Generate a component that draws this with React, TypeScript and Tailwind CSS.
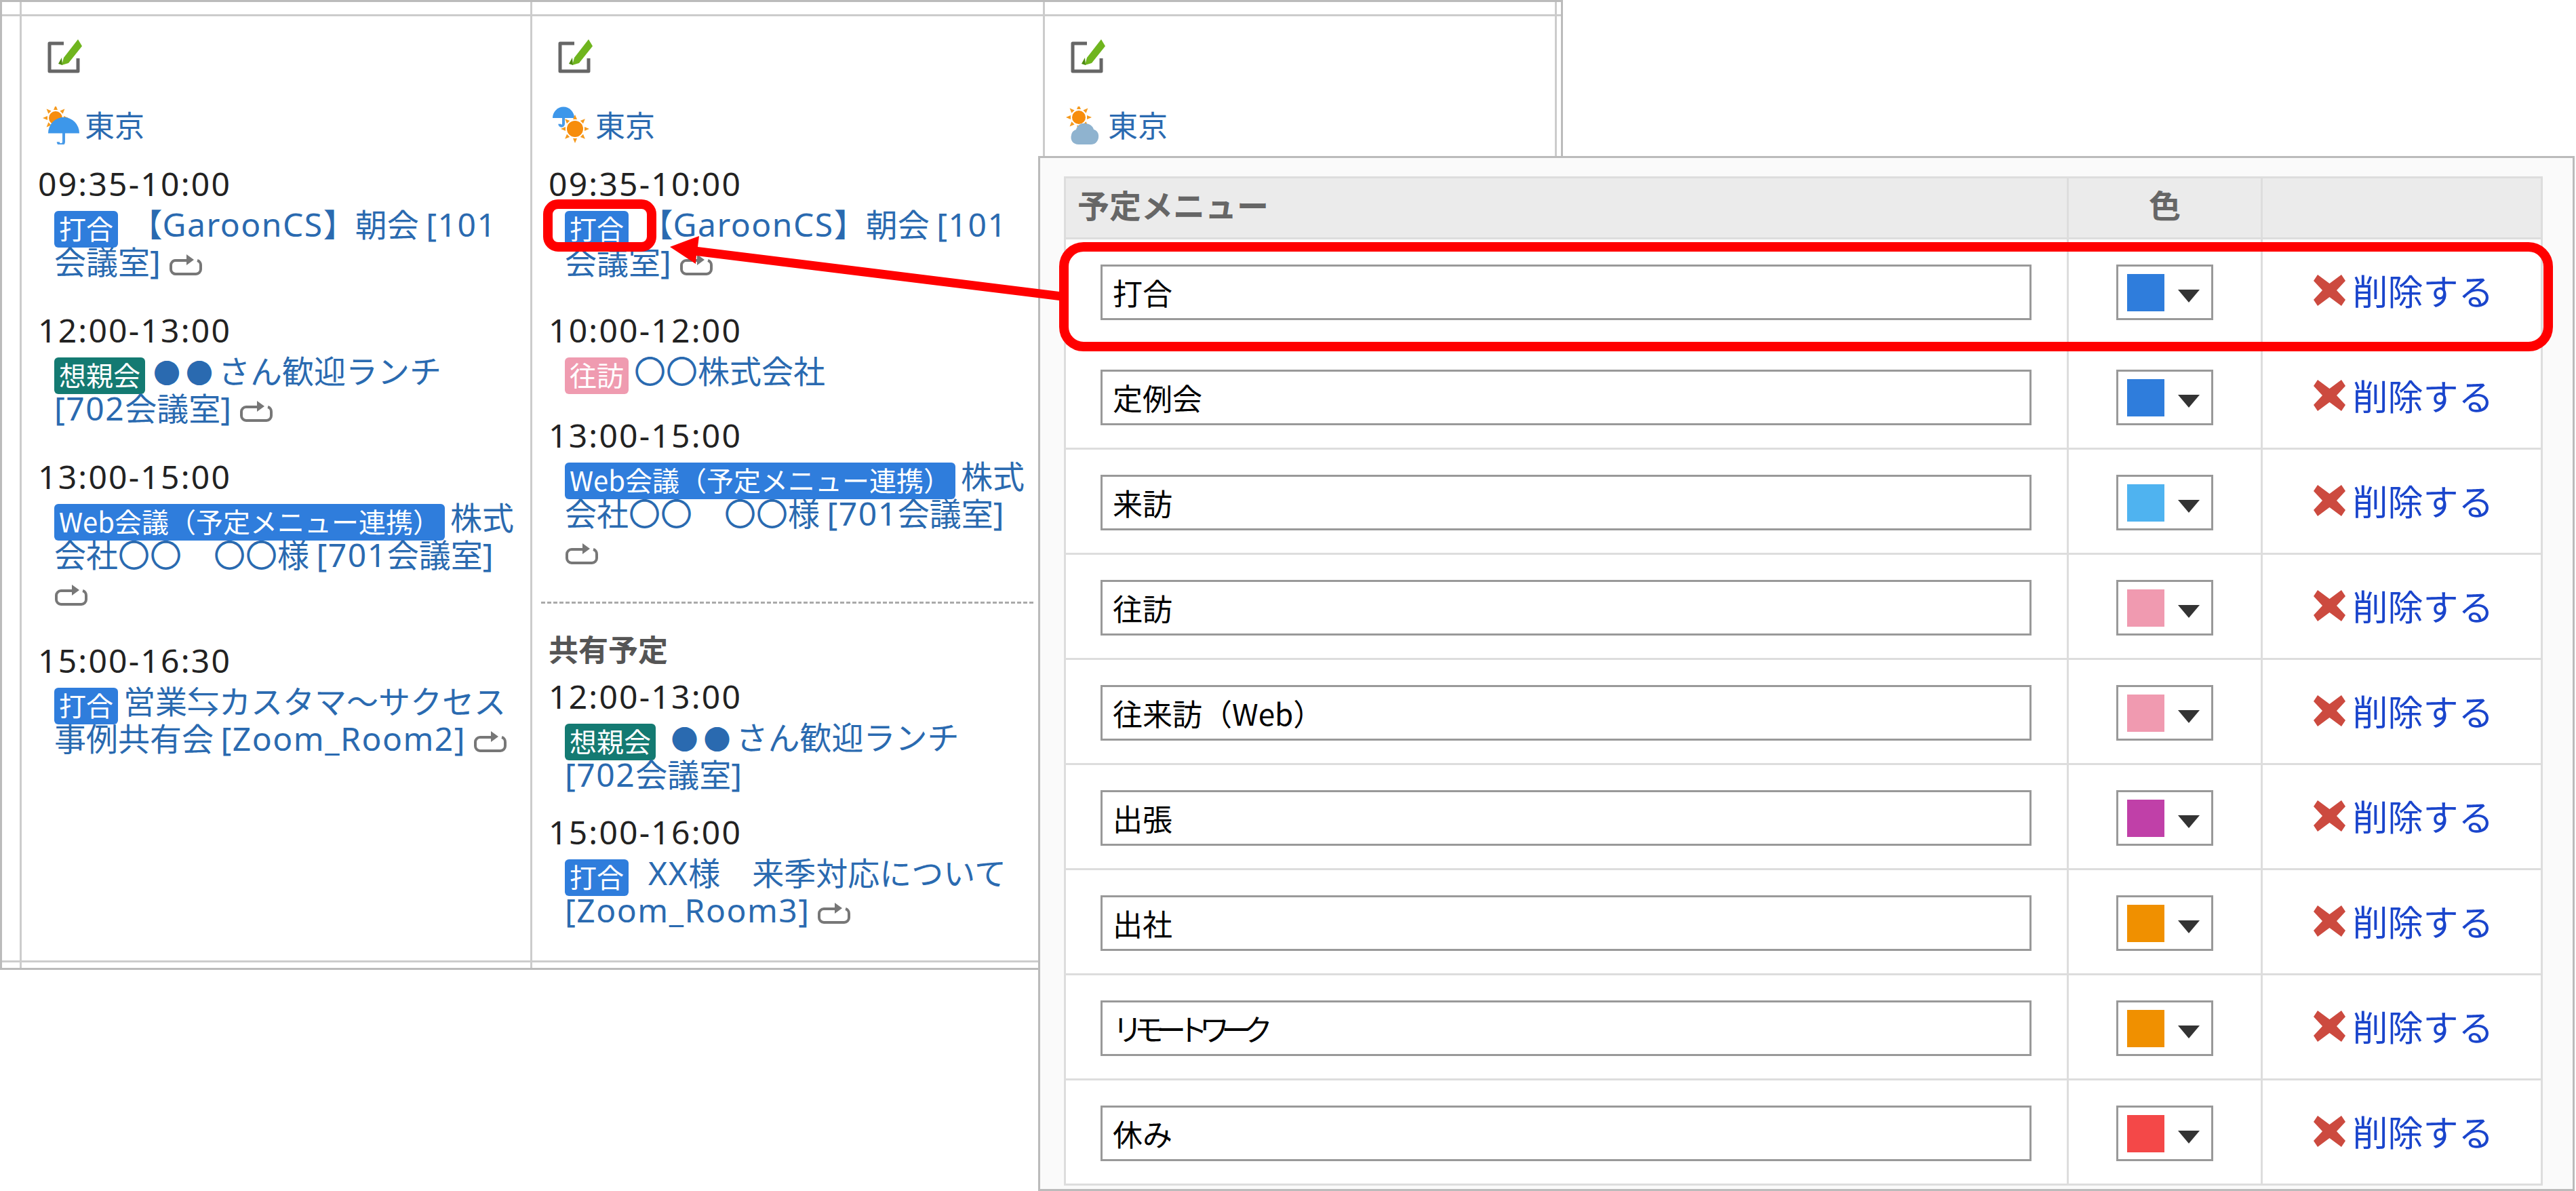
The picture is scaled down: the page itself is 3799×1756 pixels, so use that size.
import type { ReactNode } from "react";

const CJK = '"Noto Sans CJK JP", sans-serif';

/* Latin runs sit larger and wider than kanji in the original's UI font; the
   round bullets are also smaller than a full-width glyph there */
function Mixed({ text }: { text: string }) {
  const parts = text.split(/([\x21-\x7e]+(?: [\x21-\x7e]+)*|●+)/);
  return (
    <>
      {parts.map((p, i) => {
        if (/[\x21-\x7e]/.test(p)) {
          return (
            <span key={i} className="inline-block font-['Noto_Sans'] text-[48px] leading-[55px] tracking-[1.5px]">
              {p}
            </span>
          );
        }
        if (p.startsWith("●")) {
          return (
            <span key={i} className="ml-[4px] inline-block text-[40px] leading-[55px] tracking-[8px]">
              {p}
            </span>
          );
        }
        return (
          <span key={i} className="inline-block leading-[55px]">
            {p}
          </span>
        );
      })}
    </>
  );
}

function EditIcon() {
  return (
    <svg width="52" height="50" viewBox="0 0 52 50" className="ml-[14px] block">
      <path d="M24 6H3v41h42V28" fill="none" stroke="#666" strokeWidth="5" strokeLinejoin="round" />
      <path d="M45 0l6 10-20 25-10 3 3-11z" fill="#6fb51e" />
      <path d="M16 36l5-9 1 11z" fill="#4d8a10" />
    </svg>
  );
}

function Rays({ cx, cy, r }: { cx: number; cy: number; r: number }) {
  return (
    <g fill="#f59a1e">
      {[0, 45, 90, 135, 180, 225, 270, 315].map((a) => (
        <path
          key={a}
          transform={`rotate(${a} ${cx} ${cy})`}
          d={`M${cx - 3} ${cy - r - 2}h6l-3 -7z`}
        />
      ))}
      <circle cx={cx} cy={cy} r={r} fill="#f78d0c" />
    </g>
  );
}

function Umbrella({ x, y, w }: { x: number; y: number; w: number }) {
  const h = w * 0.95;
  return (
    <g>
      <path
        d={`M${x + w / 2} ${y + h * 0.3}v${h * 0.55}a${w * 0.09} ${w * 0.09} 0 0 1 -${w * 0.18} 0`}
        fill="none"
        stroke="#4a9be8"
        strokeWidth="4"
      />
      <path
        d={`M${x} ${y + h * 0.56}A${w / 2} ${h * 0.54} 0 0 1 ${x + w} ${y + h * 0.56}z`}
        fill="#3d97ea"
      />
    </g>
  );
}

function Weather({ kind }: { kind: "rain" | "sun" | "cloud" }) {
  return (
    <svg width="56" height="56" viewBox="0 0 56 56" className="block shrink-0">
      {kind === "rain" && (
        <>
          <Rays cx={20} cy={17} r={10} />
          <Umbrella x={9} y={15} w={46} />
        </>
      )}
      {kind === "sun" && (
        <>
          <Umbrella x={0} y={0} w={32} />
          <Rays cx={33} cy={33} r={12} />
        </>
      )}
      {kind === "cloud" && (
        <>
          <Rays cx={20} cy={16} r={10} />
          <path
            d="M20 56c-9 0-13-7-11-14 1-5 4-7 7-8 2-7 8-10 14-9 8 1 11 5 12 9 5 1 8 6 7 12-1 6-5 10-11 10z"
            fill="#8fb3cf"
          />
        </>
      )}
    </svg>
  );
}

function RepeatIcon() {
  return (
    <svg width="50" height="34" viewBox="0 0 50 34" className="inline-block align-[-4px]">
      <path
        d="M26 10H10a7 7 0 0 0-7 7v6a7 7 0 0 0 7 7h30a7 7 0 0 0 7-7v-6a7 7 0 0 0-5-7"
        fill="none"
        stroke="#777"
        strokeWidth="4"
      />
      <path d="M26 1l11 8-11 8z" fill="#777" />
    </svg>
  );
}

const BADGE = {
  blue: "bg-[#2f7ddc]",
  green: "bg-[#147a72]",
  pink: "bg-[#ef9bb0]",
};

function Badge({ color, children }: { color: keyof typeof BADGE; children: ReactNode }) {
  return (
    <span
      className={`mr-[8px] inline-block h-[54px] rounded-[6px] px-[7px] align-[-4px] text-[40px] leading-[50px] text-white ${BADGE[color]}`}
    >
      {children}
    </span>
  );
}

type Ev = {
  time: string;
  badge: [keyof typeof BADGE, string];
  lines: string[];
  repeat?: boolean;
  repeatOwnLine?: boolean;
  gap?: string;
};

function Event({ ev }: { ev: Ev }) {
  return (
    <div className={ev.gap ?? "mb-[48px]"}>
      <div className="h-[56px] font-['Noto_Sans'] text-[48px] leading-[56px] tracking-[2.2px] text-[#222]">
        {ev.time}
      </div>
      <div className="ml-[24px] mt-[2px] whitespace-pre text-[47px] leading-[55px] text-[#2a6ab0]">
        {ev.lines.map((line, i) => (
          <div key={i} className="h-[55px]">
            {i === 0 && <Badge color={ev.badge[0]}>{ev.badge[1]}</Badge>}
            <Mixed text={line} />
            {ev.repeat && i === ev.lines.length - 1 && (
              <>
                {" "}
                <RepeatIcon />
              </>
            )}
          </div>
        ))}
        {ev.repeatOwnLine && (
          <div className="h-[55px]">
            <RepeatIcon />
          </div>
        )}
      </div>
    </div>
  );
}

function DayHead({ kind }: { kind: "rain" | "sun" | "cloud" }) {
  return (
    <>
      <div className="pt-[34px]">
        <EditIcon />
      </div>
      <div className="ml-[6px] mt-[49px] flex h-[56px] items-center gap-[7px] text-[44px] leading-[52px] text-[#2a6ab0]">
        <Weather kind={kind} />
        <span className="-mt-[4px]">東京</span>
      </div>
    </>
  );
}

const day1: Ev[] = [
  { time: "09:35-10:00", badge: ["blue", "打合"], lines: [" 【GaroonCS】朝会 [101", "会議室]"], repeat: true },
  { time: "12:00-13:00", badge: ["green", "想親会"], lines: ["●●さん歓迎ランチ", "[702会議室]"], repeat: true },
  {
    time: "13:00-15:00",
    badge: ["blue", "Web会議（予定メニュー連携）"],
    lines: ["株式", "会社〇〇　〇〇様 [701会議室]"],
    repeatOwnLine: true,
  },
  { time: "15:00-16:30", badge: ["blue", "打合"], lines: ["営業⇆カスタマ～サクセス", "事例共有会 [Zoom_Room2]"], repeat: true },
];

const day2: Ev[] = [
  { time: "09:35-10:00", badge: ["blue", "打合"], lines: [" 【GaroonCS】朝会 [101", "会議室]"], repeat: true },
  { time: "10:00-12:00", badge: ["pink", "往訪"], lines: ["〇〇株式会社"], gap: "mb-[42px]" },
  {
    time: "13:00-15:00",
    badge: ["blue", "Web会議（予定メニュー連携）"],
    lines: ["株式", "会社〇〇　〇〇様 [701会議室]"],
    repeatOwnLine: true,
    gap: "mb-[50px]",
  },
];

const shared: Ev[] = [
  { time: "12:00-13:00", badge: ["green", "想親会"], lines: [" ●●さん歓迎ランチ", "[702会議室]"], gap: "mb-[32px]" },
  { time: "15:00-16:00", badge: ["blue", "打合"], lines: ["  XX様　来季対応について", "[Zoom_Room3]"], repeat: true, gap: "mb-0" },
];

const menu = [
  { name: "打合", color: "bg-[#2f7ddc]" },
  { name: "定例会", color: "bg-[#2f7ddc]" },
  { name: "来訪", color: "bg-[#4fb3f0]" },
  { name: "往訪", color: "bg-[#f09ab0]" },
  { name: "往来訪（Web）", color: "bg-[#f09ab0]" },
  { name: "出張", color: "bg-[#c040a8]" },
  { name: "出社", color: "bg-[#f09000]" },
  { name: "リモートワーク", color: "bg-[#f09000]", narrow: true },
  { name: "休み", color: "bg-[#f44848]" },
];

function MenuRow({ name, color, narrow }: { name: string; color: string; narrow?: boolean }) {
  return (
    <div className="grid h-[155px] grid-cols-[1479px_286px_1fr] border-b-3 border-[#ddd] bg-white">
      <div className="border-r-3 border-[#ddd] pl-[51px] pt-[37px]">
        <div
          className={`h-[82px] w-[1373px] border-3 border-[#999] pl-[15px] text-[44px] leading-[76px] text-black ${
            narrow ? "tracking-[-12px]" : ""
          }`}
        >
          {name}
        </div>
      </div>
      <div className="flex justify-center border-r-3 border-[#ddd] pt-[37px]">
        <div className="flex h-[82px] w-[143px] items-center border-3 border-[#999] pl-[13px]">
          <span className={`h-[55px] w-[55px] ${color}`} />
          <svg width="32" height="19" viewBox="0 0 32 19" className="ml-[20px] mt-[10px]">
            <path d="M0 0h32L16 19z" fill="#333" />
          </svg>
        </div>
      </div>
      <div className="flex h-[150px] items-center justify-center gap-[10px] pl-[6px]">
        <svg width="47" height="46" viewBox="0 0 47 46" className="shrink-0">
          <path d="M6 0l17.500 13L41 0l6 9-13 14 13 14-6 9-17.500-13L6 46l-6-9 13-14L0 9z" fill="#cc4a3f" />
        </svg>
        <a className="text-[52px] leading-[60px] text-[#1a45cc]">削除する</a>
      </div>
    </div>
  );
}

export default function App() {
  return (
    <div className="relative h-[1756px] w-[3799px] overflow-hidden bg-white" style={{ fontFamily: CJK }}>
      {/* calendar behind the settings panel */}
      <div className="grid h-[1430px] w-[2305px] grid-cols-[29px_753px_756px_755px_1fr] grid-rows-[21px_1392px_11px] border-3 border-[#bbb]">
        {[0, 1, 2, 3, 4].map((i) => (
          <div key={i} className={`border-b-3 border-[#ccc] ${i < 4 ? "border-r-3" : ""}`} />
        ))}
        <div className="border-r-3 border-[#ccc]" />
        <div className="min-h-0 border-r-3 border-[#ccc] pl-[24px]">
          <DayHead kind="rain" />
          <div className="mt-[30px]">
            {day1.map((ev) => (
              <Event key={ev.time} ev={ev} />
            ))}
          </div>
        </div>
        <div className="min-h-0 border-r-3 border-[#ccc] pl-[24px]">
          <DayHead kind="sun" />
          <div className="mt-[30px]">
            {day2.map((ev) => (
              <Event key={ev.time} ev={ev} />
            ))}
          </div>
          <div className="-ml-[11px] w-[726px] border-t-3 border-dashed border-[#aaa]" />
          <div className="mt-[46px] h-[40px] text-[44px] font-bold leading-[40px] text-[#555]">共有予定</div>
          <div className="mt-[23px]">
            {shared.map((ev) => (
              <Event key={ev.time} ev={ev} />
            ))}
          </div>
        </div>
        <div className="min-h-0 border-r-3 border-[#ccc] pl-[24px]">
          <DayHead kind="cloud" />
        </div>
        <div />
        {[0, 1, 2, 3, 4].map((i) => (
          <div key={i} className={`border-t-3 border-[#ccc] ${i < 4 ? "border-r-3" : ""}`} />
        ))}
      </div>

      {/* settings panel laid over the calendar */}
      <div className="absolute left-[1531px] top-[230px] h-[1526px] w-[2266px] border-3 border-[#bbb] bg-[#fafafa] pl-[35px] pt-[27px]">
        <div className="w-[2181px] border-x-3 border-t-3 border-[#ddd]">
          <div className="grid h-[90px] grid-cols-[1479px_286px_1fr] border-b-3 border-[#ddd] bg-[#ebebeb] text-[47px] font-bold leading-[76px] text-[#666]">
            <div className="border-r-3 border-[#ddd] pl-[17px]">予定メニュー</div>
            <div className="border-r-3 border-[#ddd] text-center">色</div>
            <div />
          </div>
          {menu.map((m) => (
            <MenuRow key={m.name} name={m.name} color={m.color} narrow={m.narrow} />
          ))}
        </div>
      </div>

      {/* red callouts */}
      <div className="absolute left-[801px] top-[294px] h-[77px] w-[167px] rounded-[22px] border-[14px] border-[#ff0000]" />
      <div className="absolute left-[1562px] top-[357px] h-[161px] w-[2203px] rounded-[36px] border-[14px] border-[#ff0000]" />
      <svg width="600" height="110" viewBox="0 0 600 110" className="absolute left-[980px] top-[340px]">
        <path d="M8 24L51 8 49 24 582 90 582 103 47 37 46 49z" fill="#ff0000" />
      </svg>
    </div>
  );
}
